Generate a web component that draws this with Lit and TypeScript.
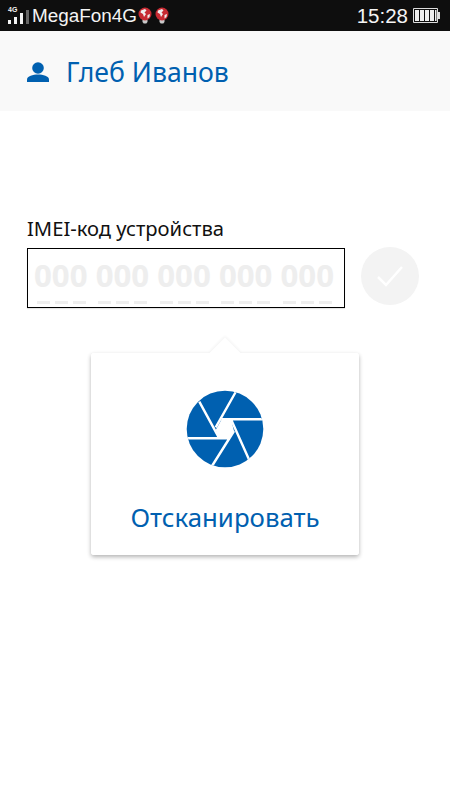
import { LitElement, html, css } from "lit";
import { customElement } from "lit/decorators.js";

const bulb = (badge: boolean) => html`<svg class="bulb" viewBox="0 0 14 17" width="14" height="17">
  <path d="M4.5 12h5v3l-1.2 1.5h-2.600L4.500 15z" fill="#c9c9c9"/>
  <circle cx="7" cy="7" r="6.500" fill="#c62a32"/>
  <path d="M3 3.500l4-1.500 1.500 1.500-2 2 1.500 1.500-2 3-1-3-2.500-1.500zM9.500 8l2.500-1-.5 3-2 1.500z" fill="#eee"/>
  ${badge ? html`<circle cx="11" cy="13.500" r="3" fill="#4a90d9"/>` : null}
</svg>`;

@customElement("app-root")
export class AppRoot extends LitElement {
  static styles = css`
    :host { display: block; width: 450px; height: 800px; background: #fff; overflow: hidden; font-family: "Noto Sans", "Open Sans", sans-serif; }
    .status { height: 31px; background: #0e0e0e; color: #f4f4f4; display: flex; align-items: center; padding: 0 9px 0 8px; font-family: "Liberation Sans", Arial, sans-serif; }
    .signal { display: flex; align-items: flex-end; gap: 3px; height: 17px; position: relative; margin-right: 3px; }
    .signal i { display: block; width: 3px; background: #f4f4f4; }
    .signal i.off { background: #666; }
    .net { position: absolute; left: 0; top: -1px; font-size: 7px; line-height: 8px; font-weight: 700; }
    .carrier { font-size: 18.900px; line-height: 31px; }
    .bulbs { display: flex; gap: 3px; margin-left: 1px; }
    .time { margin-left: auto; font-size: 20.500px; margin-right: 5px; }
    .header { box-sizing: border-box; height: 80px; padding-top: 2px; background: #f9f9f9; display: flex; align-items: center; padding-left: 27px; gap: 17px; color: #0060b0; font-size: 26.600px; }
    .main { padding: 104px 0 0 27px; position: relative; }
    .label { font-size: 20.200px; line-height: 26px; color: #111; height: 33px; }
    .row { display: flex; align-items: center; gap: 16px; }
    .field { box-sizing: border-box; width: 318px; height: 60px; border: 1.500px solid #000; overflow: hidden; padding: 6px 0 0 6px; color: #eeeeee; box-shadow: 0 1px 1px rgba(0,0,0,.1); display: flex; flex-direction: column; }
    .digits { font-size: 31.200px; font-weight: 700; line-height: 40px; height: 46px; white-space: nowrap; }
    .dashes { height: 3px; margin-left: 2.500px; display: flex; gap: 8.800px; }
    .dashes b { display: block; width: 52.800px; height: 3px; background: repeating-linear-gradient(90deg, #eee 0 13px, transparent 13px 17.800px); }
    .ok { width: 58px; height: 58px; margin-top: -5px; border-radius: 50%; background: #f3f3f3; display: flex; align-items: center; justify-content: center; }
    .card { position: relative; box-sizing: border-box; width: 268px; height: 202px; margin: 45px 0 0 64px; background: #fff; border-radius: 3px; box-shadow: 0 2px 4px rgba(0,0,0,.3); display: flex; flex-direction: column; align-items: center; padding-top: 37px; }
    .arrow { position: absolute; left: 123px; top: -11px; width: 22px; height: 22px; background: #fff; transform: rotate(45deg); box-shadow: -1px -1px 3px rgba(0,0,0,.05); }
    .cover { position: absolute; left: 0; right: 0; top: 0; bottom: 0; background: #fff; border-radius: 3px; }
    .inner { position: relative; display: flex; flex-direction: column; align-items: center; }
    .scan { margin-top: 32px; color: #0060b0; font-size: 25.800px; line-height: 34px; }
  `;

  render() {
    return html`
      <div class="status">
        <div class="signal"><span class="net">4G</span>
          <i style="height:4px"></i><i style="height:7px"></i><i style="height:11px"></i><i class="off" style="height:14px"></i>
        </div>
        <span class="carrier">MegaFon4G</span>
        <span class="bulbs">${bulb(true)}${bulb(false)}</span>
        <span class="time">15:28</span>
        <svg width="28" height="15" viewBox="0 0 28 15">
          <path d="M.5.500h24v14h-24z" fill="#0e0e0e" stroke="#ddd"/>
          <path d="M2 2h4v11H2zM7 2h4v11H7zM12 2h4v11h-4zM17 2h4v11h-4zM22 2h1.500v11H22z" fill="#eee"/>
          <path d="M25 4h2v7h-2z" fill="#ddd"/>
        </svg>
      </div>
      <div class="header">
        <svg width="22" height="21" viewBox="0 0 22 21"><circle cx="11" cy="6" r="5.800" fill="#0060b0"/><path d="M0 20v-2.500C0 14 6 12.500 11 12.500S22 14 22 17.500V20z" fill="#0060b0"/></svg>
        <span>Глеб Иванов</span>
      </div>
      <div class="main">
        <div class="label">IMEI-код устройства</div>
        <div class="row">
          <div class="field">
            <div class="digits">000 000 000 000 000</div>
            <div class="dashes"><b></b><b></b><b></b><b></b><b></b></div>
          </div>
          <div class="ok">
            <svg width="28" height="24" viewBox="0 0 28 24"><path d="M2 13l8 8L26 3" fill="none" stroke="#fff" stroke-width="2.500"/></svg>
          </div>
        </div>
        <div class="card">
          <div class="arrow"></div>
          <div class="cover"></div>
          <div class="inner">
            <svg width="78" height="78" viewBox="0 0 78 78">
              <defs><clipPath id="c"><circle cx="39" cy="39" r="38.300"/></clipPath></defs>
              <circle cx="39" cy="39" r="38.300" fill="#0060b0"/>
              <g clip-path="url(#c)" stroke="#fff" stroke-width="2.400" fill="none">
                <path d="M78 29.300H35.700M49.700 2L29.700 37.300M13.300 11.700L33.300 48.300M0 48.300H43.300M26 76L48 41M63 69.500L45 29.300"/>
              </g>
              <path d="M45 29.300H35.700L29.700 40 33.300 48.300H43.300L48 41z" fill="#fff"/>
            </svg>
            <div class="scan">Отсканировать</div>
          </div>
        </div>
      </div>
    `;
  }
}
